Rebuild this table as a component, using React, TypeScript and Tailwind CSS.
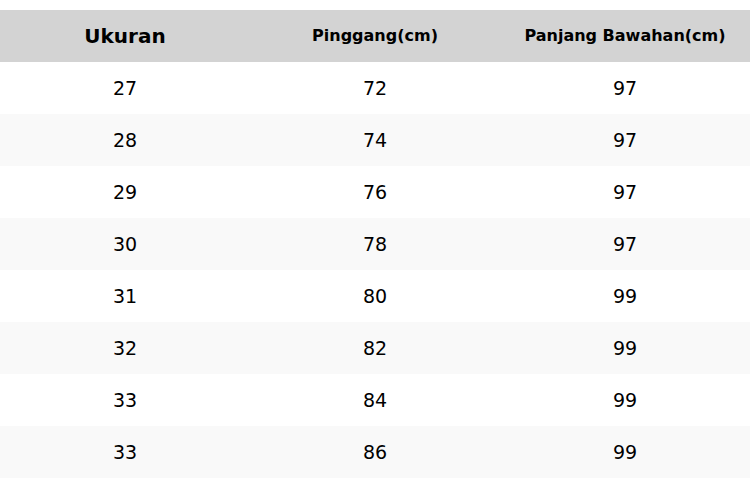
import React from "react";

const rows = [
  ["27", "72", "97"],
  ["28", "74", "97"],
  ["29", "76", "97"],
  ["30", "78", "97"],
  ["31", "80", "99"],
  ["32", "82", "99"],
  ["33", "84", "99"],
  ["33", "86", "99"],
];

const App = () => {
  return (
    <div className="w-[750px] h-[478px] bg-white pt-[10px] overflow-hidden font-['DejaVu_Sans',sans-serif] text-black">
      {/* Header */}
      <div className="grid grid-cols-3 h-[52px] bg-[#d3d3d3] items-center text-center font-bold">
        <div className="text-[20px]">Ukuran</div>
        <div className="text-[16px]">Pinggang(cm)</div>
        <div className="text-[16px]">Panjang Bawahan(cm)</div>
      </div>

      {/* Body */}
      {rows.map((r, i) => (
        <div
          key={i}
          className={`grid grid-cols-3 h-[52px] items-center text-center text-[19px] ${
            i % 2 === 1 ? "bg-[#f9f9f9]" : "bg-white"
          }`}
        >
          {r.map((c, j) => (
            <div key={j}>{c}</div>
          ))}
        </div>
      ))}
    </div>
  );
};

export default App;
